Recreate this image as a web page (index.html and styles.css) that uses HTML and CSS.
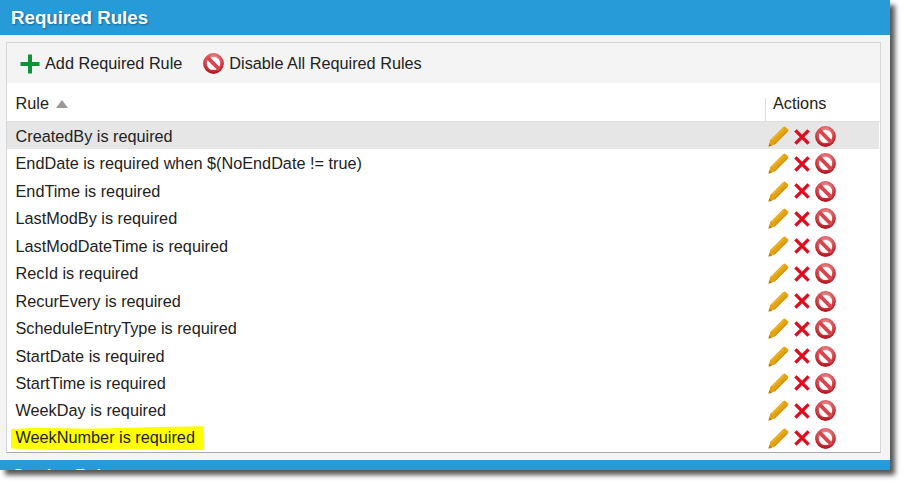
FILE: index.html
```html
<!DOCTYPE html>
<html lang="en">
<head>
<meta charset="utf-8">
<title>Required Rules</title>
<link rel="stylesheet" href="styles.css">
</head>
<body>
<svg class="defs" width="0" height="0" aria-hidden="true">
  <defs>
    <radialGradient id="banFill" cx="50%" cy="30%" r="75%">
      <stop offset="0" stop-color="#f2b4b4"/>
      <stop offset="0.55" stop-color="#dc5a60"/>
      <stop offset="1" stop-color="#b5161f"/>
    </radialGradient>
    <symbol id="ban" viewBox="0 0 20 20">
      <circle cx="10" cy="10" r="8.1" fill="#fff" stroke="url(#banFill)" stroke-width="3.6"/>
      <path d="M4.2 4.2 15.8 15.8" stroke="#d8454c" stroke-width="3.6"/>
    </symbol>
    <symbol id="pencil" viewBox="0 0 21 21">
      <path d="M0.5 20.5 2.2 14 14.8 1.6 16.8 .4 20.6 3.8 19.8 5.8 7 18.6Z" fill="#e3a313"/>
      <path d="M.5 20.5 1.3 17.2 4.2 20Z" fill="#b97f0a"/>
      <path d="M4 13.8 15.8 2.6" stroke="#eeb92f" stroke-width="1.2"/>
      <path d="M6.4 17.8 18.8 5.4" stroke="#cf950f" stroke-width="1.2"/>
    </symbol>
    <symbol id="cross" viewBox="0 0 16 16">
      <path d="M1.4 1.4 14.6 14.6M14.6 1.4 1.4 14.6" stroke="#e00b1c" stroke-width="3.4" fill="none"/>
    </symbol>
  </defs>
</svg>
<div class="window">
  <h1 class="title">Required Rules</h1>
  <div class="body">
    <div class="panel">
      <div class="toolbar">
        <span class="tool">
          <svg class="plus" viewBox="0 0 20 20" aria-hidden="true"><path d="M8 .5h4v7.5h7.5v4H12v7.5H8V12H.5V8H8Z" fill="#0d9438"/></svg>
          Add Required Rule
        </span>
        <span class="tool">
          <svg class="ban-large" aria-hidden="true"><use href="#ban"/></svg>
          Disable All Required Rules
        </span>
      </div>
      <div class="head">
        <div class="head-rule">Rule <span class="sort"></span></div>
        <div class="head-actions">Actions</div>
      </div>
      <div class="rows">
        <div class="row selected"><span class="name">CreatedBy is required</span><span class="acts"><svg class="i-pencil"><use href="#pencil"/></svg><svg class="i-cross"><use href="#cross"/></svg><svg class="i-ban"><use href="#ban"/></svg></span></div>
        <div class="row"><span class="name">EndDate is required when $(NoEndDate != true)</span><span class="acts"><svg class="i-pencil"><use href="#pencil"/></svg><svg class="i-cross"><use href="#cross"/></svg><svg class="i-ban"><use href="#ban"/></svg></span></div>
        <div class="row"><span class="name">EndTime is required</span><span class="acts"><svg class="i-pencil"><use href="#pencil"/></svg><svg class="i-cross"><use href="#cross"/></svg><svg class="i-ban"><use href="#ban"/></svg></span></div>
        <div class="row"><span class="name">LastModBy is required</span><span class="acts"><svg class="i-pencil"><use href="#pencil"/></svg><svg class="i-cross"><use href="#cross"/></svg><svg class="i-ban"><use href="#ban"/></svg></span></div>
        <div class="row"><span class="name">LastModDateTime is required</span><span class="acts"><svg class="i-pencil"><use href="#pencil"/></svg><svg class="i-cross"><use href="#cross"/></svg><svg class="i-ban"><use href="#ban"/></svg></span></div>
        <div class="row"><span class="name">RecId is required</span><span class="acts"><svg class="i-pencil"><use href="#pencil"/></svg><svg class="i-cross"><use href="#cross"/></svg><svg class="i-ban"><use href="#ban"/></svg></span></div>
        <div class="row"><span class="name">RecurEvery is required</span><span class="acts"><svg class="i-pencil"><use href="#pencil"/></svg><svg class="i-cross"><use href="#cross"/></svg><svg class="i-ban"><use href="#ban"/></svg></span></div>
        <div class="row"><span class="name">ScheduleEntryType is required</span><span class="acts"><svg class="i-pencil"><use href="#pencil"/></svg><svg class="i-cross"><use href="#cross"/></svg><svg class="i-ban"><use href="#ban"/></svg></span></div>
        <div class="row"><span class="name">StartDate is required</span><span class="acts"><svg class="i-pencil"><use href="#pencil"/></svg><svg class="i-cross"><use href="#cross"/></svg><svg class="i-ban"><use href="#ban"/></svg></span></div>
        <div class="row"><span class="name">StartTime is required</span><span class="acts"><svg class="i-pencil"><use href="#pencil"/></svg><svg class="i-cross"><use href="#cross"/></svg><svg class="i-ban"><use href="#ban"/></svg></span></div>
        <div class="row"><span class="name">WeekDay is required</span><span class="acts"><svg class="i-pencil"><use href="#pencil"/></svg><svg class="i-cross"><use href="#cross"/></svg><svg class="i-ban"><use href="#ban"/></svg></span></div>
        <div class="row"><span class="name highlighted">WeekNumber is required</span><span class="acts"><svg class="i-pencil"><use href="#pencil"/></svg><svg class="i-cross"><use href="#cross"/></svg><svg class="i-ban"><use href="#ban"/></svg></span></div>
      </div>
    </div>
  </div>
  <div class="next">Section Rules</div>
</div>
</body>
</html>
```
FILE: styles.css
```css
html, body { margin: 0; padding: 0; background: #fff; }
body {
  width: 905px;
  height: 485px;
  overflow: hidden;
  font-family: "Liberation Sans", Arial, sans-serif;
  color: #222;
}
.defs { display: block; height: 0; }
.window {
  width: 890px;
  height: 470px;
  display: flex;
  flex-direction: column;
  overflow: hidden;
  box-shadow: 5px 5px 5px #555;
}
.title {
  flex: none;
  height: 35px;
  margin: 0;
  padding: 0 0 0 11px;
  background: #279ad8;
  color: #fff;
  font-size: 18.7px;
  font-weight: bold;
  line-height: 36px;
  text-shadow: 1px 1px 2px rgba(0, 0, 0, .35);
}
.body {
  flex: none;
  height: 425px;
  box-sizing: border-box;
  padding: 7px 9px 0 6px;
  background: #f4f4f4;
}
.panel {
  height: 411px;
  box-sizing: border-box;
  display: flex;
  flex-direction: column;
  border: 1px solid #d6d6d6;
  border-bottom-color: #aaa;
  background: #fff;
}
.toolbar {
  flex: none;
  height: 40px;
  box-sizing: border-box;
  padding: 1px 0 0 13px;
  display: flex;
  align-items: center;
  gap: 20px;
  background: #f4f4f4;
  font-size: 16.25px;
}
.tool { display: flex; align-items: center; gap: 5px; }
.plus { width: 20px; height: 20px; }
.ban-large { width: 21px; height: 21px; margin-left: 1px; }
.head {
  flex: none;
  height: 39px;
  box-sizing: border-box;
  display: flex;
  border-bottom: 1px solid #ddd;
  font-size: 16.25px;
  line-height: 41px;
}
.head-rule {
  flex: 1;
  display: flex;
  align-items: center;
  gap: 7px;
  padding: 3px 0 0 8.5px;
}
.sort {
  width: 0;
  height: 0;
  border-left: 6px solid transparent;
  border-right: 6px solid transparent;
  border-bottom: 8px solid #999;
  margin-top: 1px;
}
.head-actions {
  flex: none;
  width: 107px;
  padding-left: 8px;
  background: linear-gradient(#ddd, #ddd) 0 15px / 1px 23px no-repeat;
}
.rows { flex: 1; padding-right: 1px; }
.row {
  height: 27.45px;
  box-sizing: border-box;
  padding-top: 1.6px;
  display: flex;
  align-items: center;
  justify-content: space-between;
  font-size: 16.25px;
}
.row.selected { background: #e6e6e6; }
.name { padding-left: 8.5px; }
.name.highlighted {
  margin-left: 4px;
  padding: 2px 9px 3px 4.5px;
  background: #ff0;
  clip-path: polygon(0 12%, 12% 6%, 40% 10%, 70% 4%, 100% 0, 100% 100%, 60% 96%, 25% 100%, 0 92%);
}
.acts {
  flex: none;
  width: 112px;
  display: flex;
  align-items: center;
  padding-right: 1px;
  box-sizing: border-box;
  justify-content: flex-end;
  gap: 5px;
}
.i-pencil { width: 21px; height: 21px; }
.i-cross { width: 16px; height: 16px; }
.i-ban { width: 21px; height: 21px; margin-right: 42px; }
.next {
  flex: none;
  height: 10px;
  padding-left: 13px;
  overflow: hidden;
  background: #279ad8;
  color: #fff;
  font-size: 16px;
  font-weight: bold;
  line-height: 31px;
}
```
